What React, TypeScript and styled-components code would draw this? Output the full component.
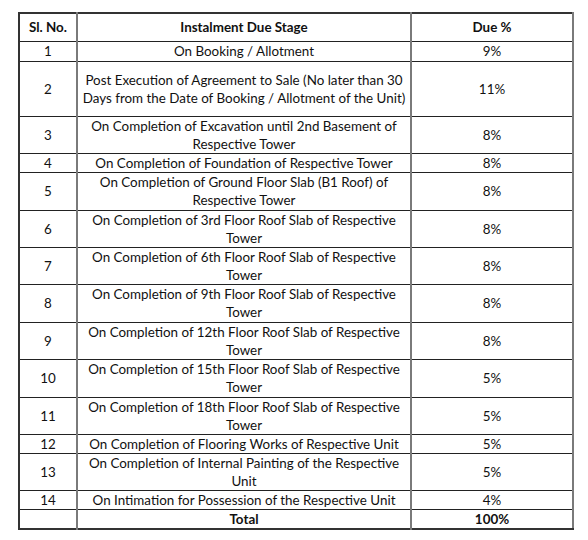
import React from 'react'
import styled, { createGlobalStyle } from 'styled-components'

const GlobalStyle = createGlobalStyle`
  body {
    margin: 0;
    background: #fff;
    font-family: Lato, "Open Sans", sans-serif;
    color: #111;
  }
`

const Page = styled.div`
  padding: 12px 0 0 18px;
`

const Table = styled.table`
  border-collapse: collapse;
  width: 556px;
  table-layout: fixed;
  font-size: 13.4px;
  line-height: 18px;
  border-top: 2px solid #333;
  border-left: 2px solid #333;
  border-bottom: 2px solid #333;
  border-right: 2px solid #7a7a7a;
`

const Row = styled.tr<{ $h: number }>`
  height: ${p => p.$h}px;
`

const HeadCell = styled.th`
  font-weight: 700;
  text-align: center;
  padding: 0;
  border-bottom: 1px solid #222;
  & + & {
    border-left: 2px solid #7a7a7a;
  }
`

const Cell = styled.td<{ $bold?: boolean }>`
  text-align: center;
  vertical-align: middle;
  padding: 0;
  white-space: nowrap;
  font-weight: ${p => (p.$bold ? 700 : 400)};
  border-bottom: 1px solid #222;
  & + & {
    border-left: 2px solid #7a7a7a;
  }
`

type Item = { no: string; stage: string[]; due: string; h: number }

const items: Item[] = [
  { no: '1', stage: ['On Booking / Allotment'], due: '9%', h: 20 },
  {
    no: '2',
    stage: [
      'Post Execution of Agreement to Sale (No later than 30',
      'Days from the Date of Booking / Allotment of the Unit)',
    ],
    due: '11%',
    h: 55,
  },
  { no: '3', stage: ['On Completion of Excavation until 2nd Basement of', 'Respective Tower'], due: '8%', h: 36 },
  { no: '4', stage: ['On Completion of Foundation of Respective Tower'], due: '8%', h: 18 },
  { no: '5', stage: ['On Completion of Ground Floor Slab (B1 Roof) of', 'Respective Tower'], due: '8%', h: 38 },
  { no: '6', stage: ['On Completion of 3rd Floor Roof Slab of Respective', 'Tower'], due: '8%', h: 36 },
  { no: '7', stage: ['On Completion of 6th Floor Roof Slab of Respective', 'Tower'], due: '8%', h: 36 },
  { no: '8', stage: ['On Completion of 9th Floor Roof Slab of Respective', 'Tower'], due: '8%', h: 38 },
  { no: '9', stage: ['On Completion of 12th Floor Roof Slab of Respective', 'Tower'], due: '8%', h: 36 },
  { no: '10', stage: ['On Completion of 15th Floor Roof Slab of Respective', 'Tower'], due: '5%', h: 38 },
  { no: '11', stage: ['On Completion of 18th Floor Roof Slab of Respective', 'Tower'], due: '5%', h: 35 },
  { no: '12', stage: ['On Completion of Flooring Works of Respective Unit'], due: '5%', h: 19 },
  { no: '13', stage: ['On Completion of Internal Painting of the Respective', 'Unit'], due: '5%', h: 36 },
  { no: '14', stage: ['On Intimation for Possession of the Respective Unit'], due: '4%', h: 18 },
]

const App = () => {
  return (
    <Page>
      <GlobalStyle />
      <Table>
        <colgroup>
          <col style={{ width: 58 }} />
          <col style={{ width: 334 }} />
          <col />
        </colgroup>
        <thead>
          <Row $h={28}>
            <HeadCell>Sl. No.</HeadCell>
            <HeadCell>Instalment Due Stage</HeadCell>
            <HeadCell>Due %</HeadCell>
          </Row>
        </thead>
        <tbody>
          {items.map(it => (
            <Row key={it.no} $h={it.h}>
              <Cell>{it.no}</Cell>
              <Cell>
                {it.stage.map((line, i) => (
                  <React.Fragment key={i}>
                    {i > 0 && <br />}
                    {line}
                  </React.Fragment>
                ))}
              </Cell>
              <Cell>{it.due}</Cell>
            </Row>
          ))}
          <Row $h={18}>
            <Cell />
            <Cell $bold>Total</Cell>
            <Cell $bold>100%</Cell>
          </Row>
        </tbody>
      </Table>
    </Page>
  )
}

export default App
